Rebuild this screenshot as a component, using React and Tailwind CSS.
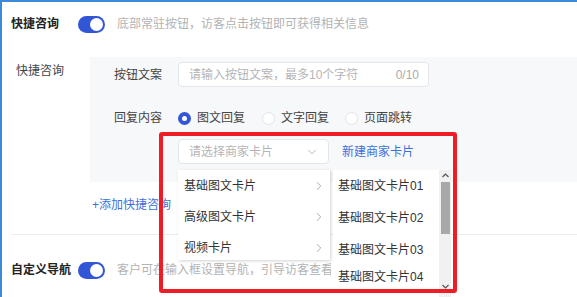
import React from 'react';
import { ChevronDown, ChevronRight } from 'lucide-react';

const Toggle = () => (
    <div className="w-[27px] h-[17px] rounded-full bg-[#3356d6] flex items-center justify-end pr-[2px] shrink-0">
        <div className="w-[13px] h-[13px] rounded-full bg-white" />
    </div>
);

const Radio = ({ checked, label, className = "" }) => (
    <div className={`flex items-center ${className}`}>
        {checked ? (
            <div className="w-[13px] h-[13px] rounded-full border-[4px] border-[#3356d6] bg-white" />
        ) : (
            <div className="w-[13px] h-[13px] rounded-full border border-[#e2e4e8] bg-white" />
        )}
        <span className="ml-[6px] text-[#444]">{label}</span>
    </div>
);

const cardTypes = ["基础图文卡片", "高级图文卡片", "视频卡片"];

const cards = [
    { name: "基础图文卡片01", h: "h-[32px]" },
    { name: "基础图文卡片02", h: "h-[32px]" },
    { name: "基础图文卡片03", h: "h-[32px]" },
    { name: "基础图文卡片04", h: "h-[22px]" },
];

export default function App() {
    return (
        <div className="relative w-[577px] h-[297px] overflow-hidden bg-white border-t-2 border-l-2 border-[#3b8ad6] text-[12px] leading-[18px] font-['Liberation_Sans','Noto_Sans_CJK_SC',sans-serif]">
            {/* 快捷咨询 开关 */}
            <div className="flex items-center h-[18px] mt-[13px] pl-[9px]">
                <div className="w-[67px] font-bold text-[#222]">快捷咨询</div>
                <Toggle />
                <div className="ml-[12px] text-[#b3b3b3] whitespace-nowrap">底部常驻按钮，访客点击按钮即可获得相关信息</div>
            </div>

            <div className="flex mt-[24px]">
                <div className="w-[88px] pl-[14px] pt-[5px] text-[#444] shrink-0">快捷咨询</div>
                <div className="flex-1 h-[125px] bg-[#f7f8fa] pl-[24px] pt-[5px]">
                    <div className="flex items-center h-[25px]">
                        <div className="w-[64px] text-[#444]">按钮文案</div>
                        <div className="w-[251px] h-[25px] bg-white border border-[#e3e6eb] rounded-[4px] flex items-center justify-between pl-[10px] pr-[9px]">
                            <span className="text-[#b5b5b5]">请输入按钮文案，最多10个字符</span>
                            <span className="text-[#aaa]">0/10</span>
                        </div>
                    </div>
                    <div className="flex items-center h-[18px] mt-[22px]">
                        <div className="w-[64px] text-[#444]">回复内容</div>
                        <Radio checked label="图文回复" />
                        <Radio label="文字回复" className="ml-[17px]" />
                        <Radio label="页面跳转" className="ml-[16px]" />
                    </div>
                    <div className="flex items-center mt-[12px]">
                        <div className="w-[64px]" />
                        <div className="w-[151px] h-[25px] bg-white border border-[#e3e6eb] rounded-[4px] flex items-center justify-between pl-[10px] pr-[9px]">
                            <span className="text-[#b5b5b5]">请选择商家卡片</span>
                            <ChevronDown size={14} strokeWidth={1.5} className="text-[#aaa]" />
                        </div>
                        <a className="ml-[13px] text-[#3d6fdb]">新建商家卡片</a>
                    </div>
                </div>
            </div>

            <div className="h-[18px] mt-[14px] pl-[90px] text-[#3d6fdb]">+添加快捷咨询</div>

            <div className="h-px bg-[#ececec] ml-[9px] mt-[20px]" />

            {/* 自定义导航 */}
            <div className="flex items-center h-[18px] mt-[26px] pl-[9px]">
                <div className="w-[67px] font-bold text-[#222]">自定义导航</div>
                <Toggle />
                <div className="ml-[12px] w-[214px] overflow-hidden text-[#b3b3b3] whitespace-nowrap">客户可在输入框设置导航，引导访客查看更多内容</div>
            </div>

            {/* cascader dropdown */}
            <div className="absolute left-[176px] top-[168px] w-[152px] h-[90px] bg-white shadow-[1px_1px_3px_rgba(0,0,0,0.18)] overflow-hidden">
                {cardTypes.map((t) => (
                    <div key={t} className="h-[31px] flex items-center justify-between pl-[6px] pr-[4px] text-[#333]">
                        <span>{t}</span>
                        <ChevronRight size={14} strokeWidth={1.5} className="text-[#9aa0aa]" />
                    </div>
                ))}
            </div>
            <div className="absolute left-[331px] top-[168px] w-[118px] h-[127px] bg-white flex">
                <div className="flex-1 pl-[5px]">
                    {cards.map((c) => (
                        <div key={c.name} className={`${c.h} flex items-center text-[#333] whitespace-nowrap`}>{c.name}</div>
                    ))}
                </div>
                <div className="w-[12px] h-full bg-[#f1f1f1] flex flex-col items-center">
                    <svg width="9" height="10" viewBox="0 0 9 10" className="mt-[1px]">
                        <polyline points="1.5,6 4.5,3 7.5,6" fill="none" stroke="#555" strokeWidth="1.2" />
                    </svg>
                    <div className="w-[9px] h-[52px] bg-[#a8a8a8] mt-[1px]" />
                    <div className="flex-1" />
                    <svg width="9" height="10" viewBox="0 0 9 10" className="mb-[6px]">
                        <polyline points="1.5,4 4.5,7 7.5,4" fill="none" stroke="#555" strokeWidth="1.2" />
                    </svg>
                </div>
            </div>

            {/* highlight box */}
            <div className="absolute left-[157px] top-[130px] w-[298px] h-[161px] border-[4px] border-[#ee1c25] rounded-[3px]" />
        </div>
    );
}
